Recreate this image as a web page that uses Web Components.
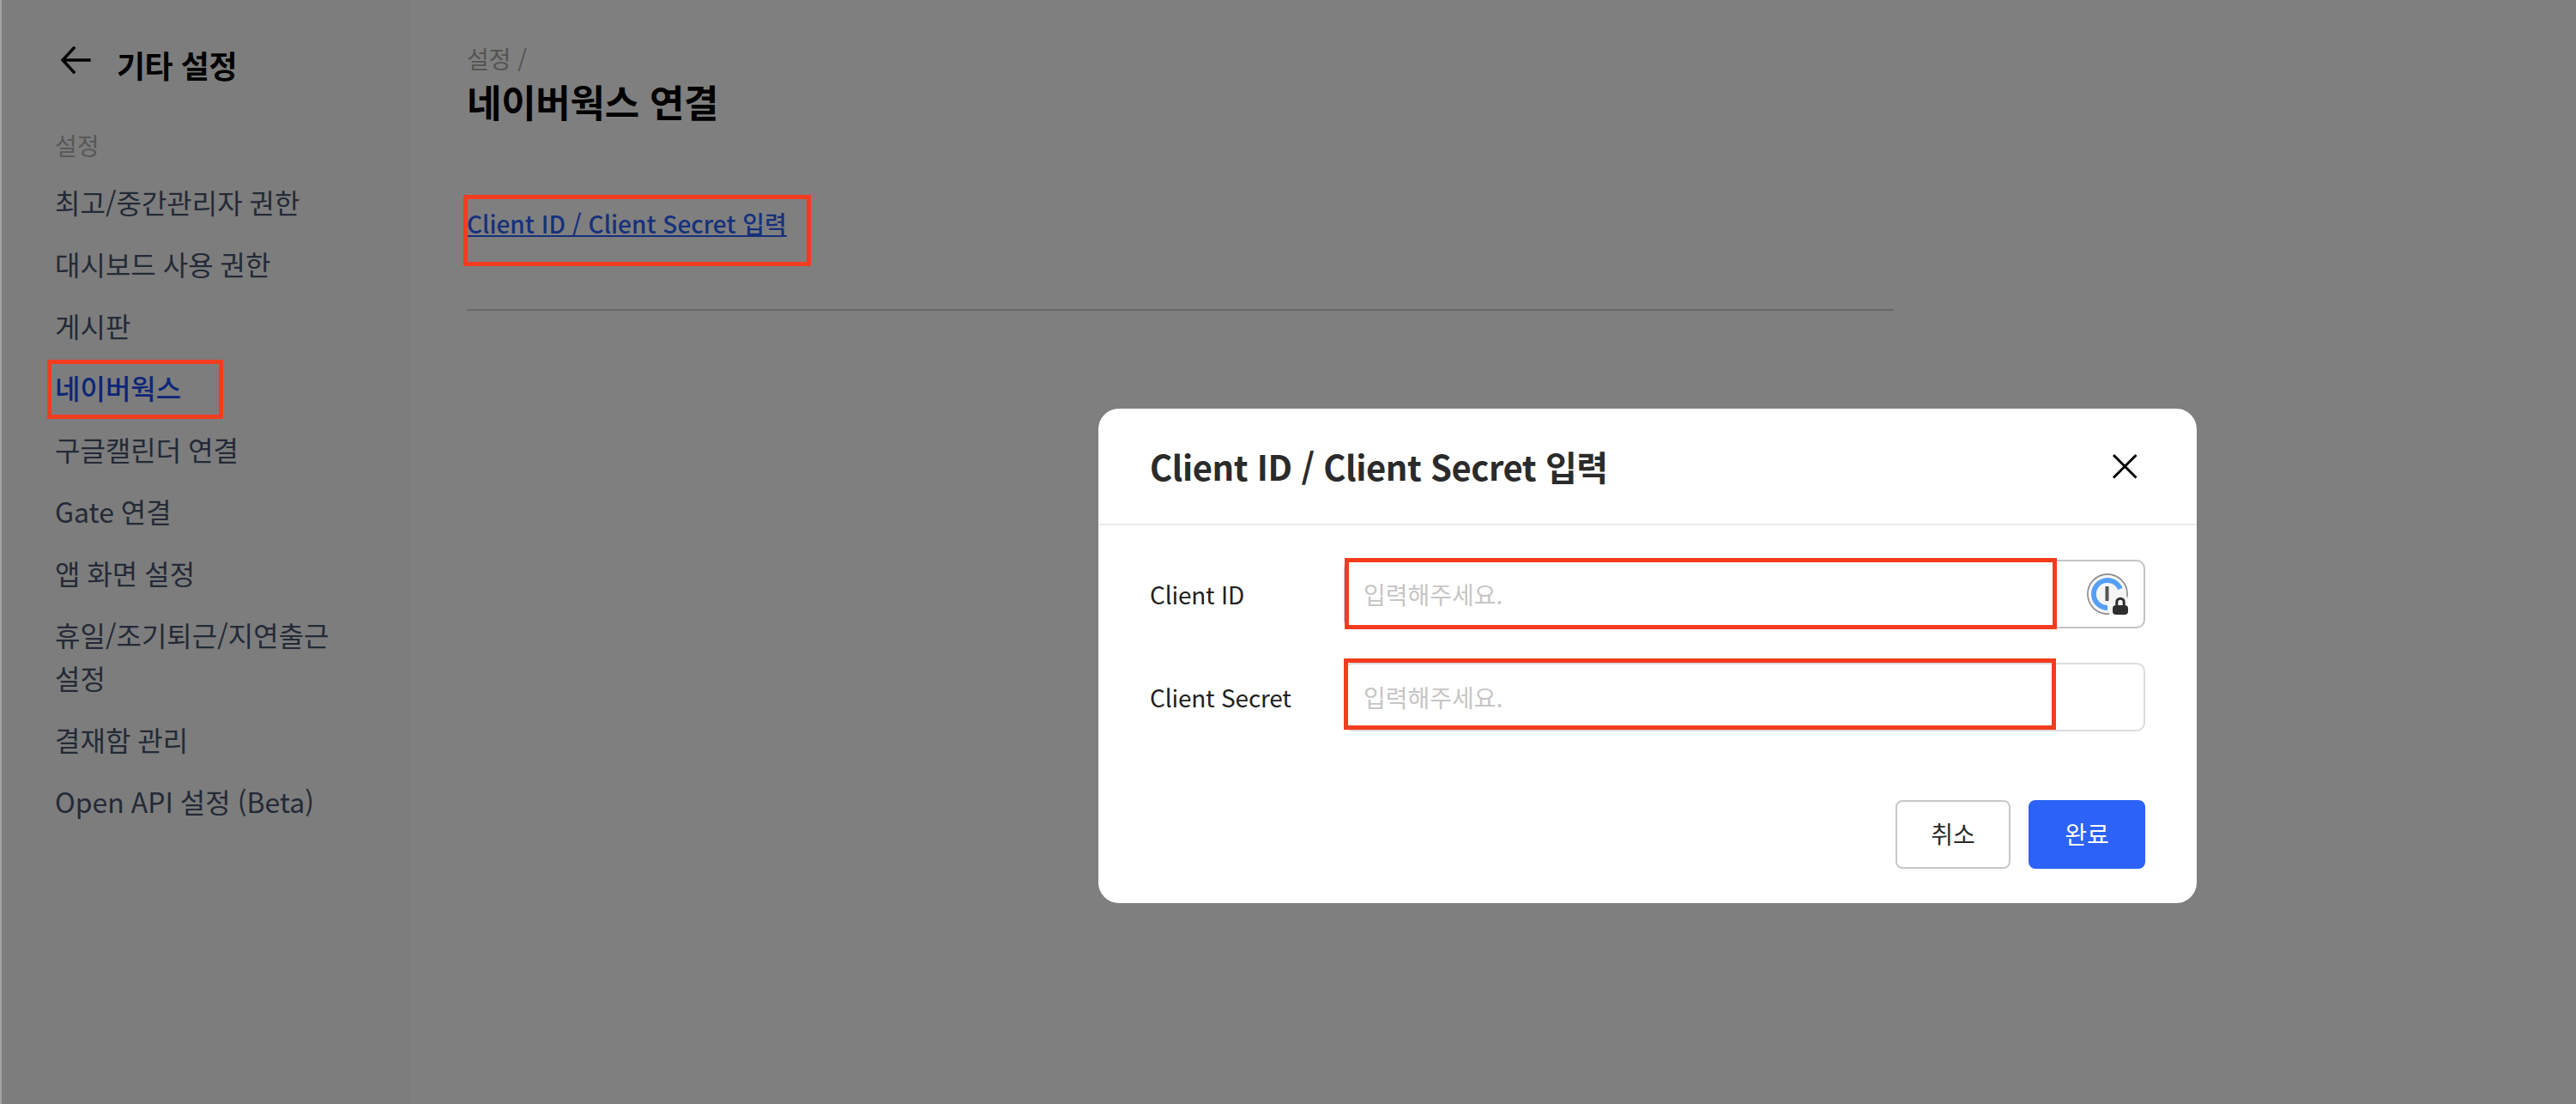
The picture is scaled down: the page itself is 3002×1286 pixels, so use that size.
<!DOCTYPE html>
<html lang="ko">
<head>
<meta charset="utf-8">
<title>네이버웍스 연결</title>
<style>
  html, body { margin: 0; padding: 0; height: 100%; }
  body { font-family: "Noto Sans CJK KR", "Noto Sans", sans-serif; background: #fff; overflow: hidden; position: relative; width: 3002px; height: 1286px; }
</style>
</head>
<body>
<app-shell>
  <side-nav slot="side" heading="기타 설정" section="설정">
    <nav-item>최고/중간관리자 권한</nav-item>
    <nav-item>대시보드 사용 권한</nav-item>
    <nav-item>게시판</nav-item>
    <nav-item active>네이버웍스</nav-item>
    <nav-item>구글캘린더 연결</nav-item>
    <nav-item>Gate 연결</nav-item>
    <nav-item>앱 화면 설정</nav-item>
    <nav-item>휴일/조기퇴근/지연출근 설정</nav-item>
    <nav-item>결재함 관리</nav-item>
    <nav-item>Open API 설정 (Beta)</nav-item>
  </side-nav>
  <main-pane slot="main" crumb="설정 /" heading="네이버웍스 연결" link="Client ID / Client Secret 입력"></main-pane>
</app-shell>

<modal-scrim>
  <modal-dialog heading="Client ID / Client Secret 입력">
    <form-row label="Client ID" filled placeholder="입력해주세요."></form-row>
    <form-row label="Client Secret" placeholder="입력해주세요."></form-row>
  </modal-dialog>
</modal-scrim>

<mark-box style="left:55px;top:419px;width:205px;height:69px"></mark-box>
<mark-box style="left:540px;top:227px;width:405px;height:83px"></mark-box>
<mark-box style="left:1567px;top:650px;width:830px;height:83px"></mark-box>
<mark-box style="left:1566px;top:767px;width:830px;height:83px"></mark-box>

<script>
const FONT = '"Noto Sans CJK KR", "Noto Sans", sans-serif';
function def(name, render) {
  customElements.define(name, class extends HTMLElement {
    constructor() { super(); this.attachShadow({ mode: 'open' }); }
    connectedCallback() { this.shadowRoot.innerHTML = render(this); }
  });
}

def('app-shell', () => `
  <style>
    :host { display: flex; width: 3002px; height: 1286px; background: #fff; border-left: 2px solid #a2a2a2; box-sizing: border-box; font-family: ${FONT}; }
    .side { flex: 0 0 476px; background: #fafafa; }
    .main { flex: 1; }
  </style>
  <div class="side"><slot name="side"></slot></div>
  <div class="main"><slot name="main"></slot></div>`);

def('side-nav', el => `
  <style>
    :host { display: block; padding: 53px 0 0 62px; width: 330px; }
    header { display: flex; align-items: center; gap: 30px; height: 44px; margin-left: 6px; }
    svg { width: 36px; height: 32px; flex: none; display: block; margin-top: -11px; }
    h1 { margin: 0; font-size: 36px; line-height: 44px; font-weight: 700; color: #000; letter-spacing: -0.5px; white-space: nowrap; }
    .sec { margin: 52px 0 10px; font-size: 28px; line-height: 40px; color: #b0b0b0; }
  </style>
  <header>
    <svg viewBox="0 0 36 32" fill="none" stroke="#000" stroke-width="3.4" stroke-linecap="square"><path d="M16 2 3 16l13 14"/><path d="M4 16h30"/></svg>
    <h1>${el.getAttribute('heading')}</h1>
  </header>
  <div class="sec">${el.getAttribute('section')}</div>
  <slot></slot>`);

def('nav-item', el => `
  <style>
    :host { display: block; padding: 11px 0; font-size: 32px; line-height: 50px; word-spacing: -1px; color: ${el.hasAttribute('active') ? '#1a4cf0' : '#48546e'}; font-weight: ${el.hasAttribute('active') ? 500 : 400}; }
  </style><slot></slot>`);

def('main-pane', el => `
  <style>
    :host { display: block; padding: 48px 0 0 66px; width: 1663px; box-sizing: content-box; }
    .crumb { font-size: 28px; line-height: 40px; color: #a8a8a8; }
    h2 { margin: 0; padding-top: 1px; font-size: 44px; line-height: 58px; font-weight: 700; color: #000; letter-spacing: -0.3px; }
    .body { margin-top: 88px; height: 125px; border-bottom: 2px solid #cfcfcf; }
    a { font-size: 28px; line-height: 50px; font-weight: 500; color: #2c62f7; text-decoration: underline; display: inline-block; }
  </style>
  <div class="crumb">${el.getAttribute('crumb')}</div>
  <h2>${el.getAttribute('heading')}</h2>
  <div class="body"><a href="#">${el.getAttribute('link')}</a></div>`);

def('modal-scrim', () => `
  <style>
    :host { position: absolute; inset: 0 0 0 2px; background: rgba(0,0,0,.5); font-family: ${FONT}; }
  </style><slot></slot>`);

def('modal-dialog', el => `
  <style>
    :host { position: absolute; left: 1278px; top: 476px; width: 1280px; height: 576px; background: #fff; border-radius: 24px; display: flex; flex-direction: column; }
    header { height: 134px; flex: none; display: flex; align-items: center; justify-content: space-between; padding: 0 68px 0 60px; border-bottom: 2px solid #ebebeb; }
    h3 { margin: 0; font-size: 40px; font-weight: 700; color: #2b2b2b; line-height: 56px; letter-spacing: -0.45px; }
    svg { width: 32px; height: 32px; display: block; }
    .body { flex: 1; padding: 40px 60px 0 60px; display: flex; flex-direction: column; gap: 40px; }
    footer { flex: none; display: flex; justify-content: flex-end; gap: 21px; padding: 0 60px 40px; }
    button { width: 136px; height: 80px; border-radius: 8px; font: 400 28px/1 ${FONT}; box-sizing: border-box; padding: 0 0 2px; }
    .ghost { background: #fff; border: 2px solid #c8c8c8; color: #2b2b2b; width: 134px; }
    .primary { background: #2c62f7; border: 0; color: #fff; }
  </style>
  <header>
    <h3>${el.getAttribute('heading')}</h3>
    <svg viewBox="0 0 32 32" fill="none" stroke="#000" stroke-width="3"><path d="M3 3 29.5 29.5M29.5 3 3 29.5"/></svg>
  </header>
  <div class="body"><slot></slot></div>
  <footer><button class="ghost">취소</button><button class="primary">완료</button></footer>`);

def('form-row', el => {
  const filled = el.hasAttribute('filled');
  return `
  <style>
    :host { display: flex; align-items: center; height: 80px; }
    label { flex: 0 0 226px; font-size: 28px; line-height: 40px; color: #1f1f1f; letter-spacing: -0.2px; }
    .field { flex: 1; height: 80px; box-sizing: border-box; border: 2px solid ${filled ? '#c4c4c4' : '#dcdcdc'}; border-radius: 10px; display: flex; align-items: center; justify-content: space-between; padding: 0 18px 0 21px; }
    .ph { font-size: 28px; color: #c6c6c6; line-height: 40px; }
    svg { width: 48px; height: 48px; display: block; }
  </style>
  <label>${el.getAttribute('label')}</label>
  <div class="field">
    <span class="ph">${el.getAttribute('placeholder')}</span>
    ${filled ? `<svg viewBox="0 0 48 48">
      <circle cx="24" cy="24" r="23.1" fill="#f5f5f5" stroke="#8c8c8c" stroke-width="1.6"/>
      <path d="M24 40A16 16 0 1 1 38.8 18" fill="none" stroke="#559ff5" stroke-width="5.8"/>
      <rect x="21.5" y="15" width="4" height="17" fill="#555"/>
      <path d="M26 48V31a7 7 0 0 1 7-7h8a7 7 0 0 1 7 7v17z" fill="#f5f5f5"/>
      <rect x="30" y="37" width="18" height="11" rx="4" fill="#2e2e2e"/>
      <path d="M34.8 38v-4.6a4.2 4.2 0 0 1 8.4 0V38" fill="none" stroke="#2e2e2e" stroke-width="3"/>
    </svg>` : ''}
  </div>`;
});

def('mark-box', () => `
  <style>
    :host { position: absolute; box-sizing: border-box; border: 5px solid #f33c1f; display: block; }
  </style>`);
</script>
</body>
</html>
